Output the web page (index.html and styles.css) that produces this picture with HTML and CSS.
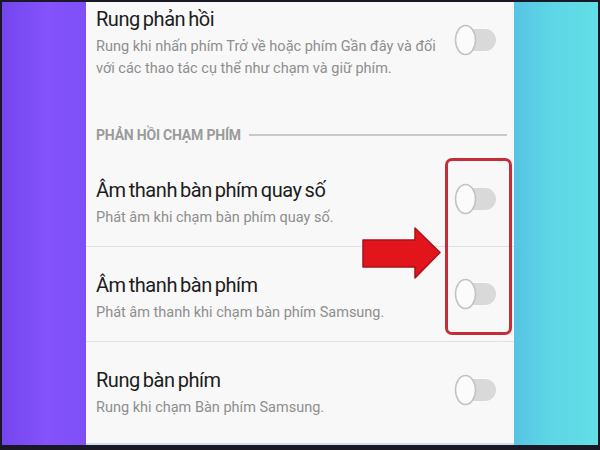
FILE: index.html
```html
<!DOCTYPE html>
<html lang="vi">
<head>
<meta charset="utf-8">
<title>Phản hồi chạm phím</title>
<link rel="stylesheet" href="styles.css">
</head>
<body>
<div class="frame">
  <div class="side side-left"></div>
  <main class="panel">
    <div class="row row-first">
      <div class="text">
        <div class="title">Rung phản hồi</div>
        <div class="desc">Rung khi nhấn phím Trở về hoặc phím Gần đây và đối<br>với các thao tác cụ thể như chạm và giữ phím.</div>
      </div>
      <svg class="toggle" viewBox="0 0 44 32" width="44" height="32"><rect x="10" y="5" width="32" height="22" rx="11" fill="#d9d9d9"/><ellipse cx="11.5" cy="16" rx="10" ry="14.5" fill="#fbfbfb" stroke="#c2c2c2" stroke-width="1.5"/></svg>
    </div>
    <div class="section"><span class="section-label">PHẢN HỒI CHẠM PHÍM</span><span class="section-rule"></span></div>
    <div class="row row-divided">
      <div class="text">
        <div class="title">Âm thanh bàn phím quay số</div>
        <div class="desc">Phát âm khi chạm bàn phím quay số.</div>
      </div>
      <svg class="toggle" viewBox="0 0 44 32" width="44" height="32"><rect x="10" y="5" width="32" height="22" rx="11" fill="#d9d9d9"/><ellipse cx="11.5" cy="16" rx="10" ry="14.5" fill="#fbfbfb" stroke="#c2c2c2" stroke-width="1.5"/></svg>
    </div>
    <div class="row row-divided">
      <div class="text">
        <div class="title">Âm thanh bàn phím</div>
        <div class="desc">Phát âm thanh khi chạm bàn phím Samsung.</div>
      </div>
      <svg class="toggle" viewBox="0 0 44 32" width="44" height="32"><rect x="10" y="5" width="32" height="22" rx="11" fill="#d9d9d9"/><ellipse cx="11.5" cy="16" rx="10" ry="14.5" fill="#fbfbfb" stroke="#c2c2c2" stroke-width="1.5"/></svg>
    </div>
    <div class="row">
      <div class="text">
        <div class="title">Rung bàn phím</div>
        <div class="desc">Rung khi chạm Bàn phím Samsung.</div>
      </div>
      <svg class="toggle" viewBox="0 0 44 32" width="44" height="32"><rect x="10" y="5" width="32" height="22" rx="11" fill="#d9d9d9"/><ellipse cx="11.5" cy="16" rx="10" ry="14.5" fill="#fbfbfb" stroke="#c2c2c2" stroke-width="1.5"/></svg>
    </div>
    <div class="highlight"></div>
    <svg class="arrow" viewBox="0 0 80 53" width="80" height="53"><polygon points="1,13 53,13 53,1 78,25.5 53,51 53,40 1,40" fill="#e3151c" stroke="#a8121a" stroke-width="1.5" stroke-linejoin="round"/></svg>
  </main>
  <div class="side side-right"></div>
</div>
</body>
</html>
```
FILE: styles.css
```css
* { box-sizing: border-box; }

html, body {
  margin: 0;
  padding: 0;
  background: #1a1726;
}

.frame {
  width: 600px;
  height: 450px;
  padding: 2px 2px 5px 2px;
  display: flex;
  background: #1a1726;
  font-family: Roboto, "Noto Sans", sans-serif;
  overflow: hidden;
}

.side {
  width: 84px;
  flex: none;
}

.side-left {
  background: linear-gradient(90deg, #7446ee 0%, #8552fc 55%, #7e4ff7 100%);
}

.side-right {
  background: linear-gradient(90deg, #56c4e3 0%, #5dd5e6 40%, #62dfe6 100%);
}

.panel {
  position: relative;
  width: 428px;
  flex: none;
  background: #f8f8f8;
  border-bottom: 2px solid #cddfec;
  display: flex;
  flex-direction: column;
}

.row {
  display: flex;
  align-items: center;
  justify-content: space-between;
  height: 95px;
  padding: 0 16px 0 10px;
}

.row-divided {
  border-bottom: 1px solid #e3e3e3;
}

.row-first {
  height: auto;
  align-items: flex-start;
  padding-top: 5px;
}

.row-first .toggle {
  margin-top: 17px;
}

.row .text {
  padding-top: 8px;
}

.row-first .text {
  padding-top: 0;
}

.title {
  font-size: 20px;
  line-height: 24px;
  color: #1c1c1c;
  margin-bottom: 5px;
  letter-spacing: -0.45px;
  word-spacing: -1.5px;
}

.desc {
  font-size: 14.5px;
  line-height: 22px;
  color: #8e8e8e;
  letter-spacing: 0;
}

.toggle {
  flex: none;
  display: block;
}

.section {
  display: flex;
  align-items: center;
  gap: 8px;
  margin: 45px 7px 7px 10px;
  height: 20px;
}

.section-label {
  font-size: 14px;
  line-height: 20px;
  font-weight: 700;
  color: #9b9b9b;
  letter-spacing: -0.2px;
  white-space: nowrap;
}

.section-rule {
  flex: 1;
  height: 2px;
  background: #c9c9c9;
}

.highlight {
  position: absolute;
  left: 359px;
  top: 156px;
  width: 67px;
  height: 177px;
  border: 3px solid #c52d38;
  border-radius: 7px;
}

.arrow {
  position: absolute;
  left: 276px;
  top: 225px;
  display: block;
}
```
